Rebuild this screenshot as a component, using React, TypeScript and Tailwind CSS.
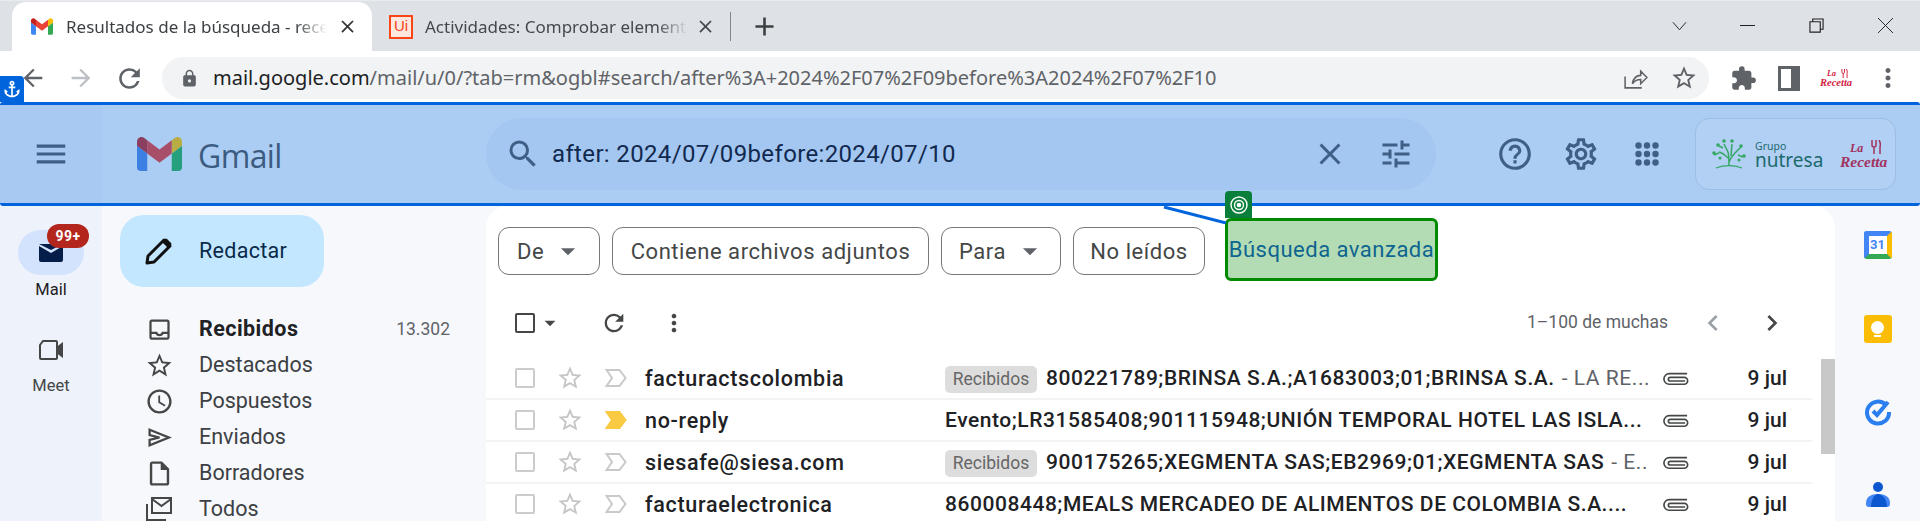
import {
  MdAnchor,
  MdArrowBack,
  MdArrowDropDown,
  MdArrowForward,
  MdChevronLeft,
  MdChevronRight,
  MdClose,
  MdExtension,
  MdLock,
  MdMenu,
  MdMoreVert,
  MdOutlineHelpOutline,
  MdOutlineInbox,
  MdOutlineInsertDriveFile,
  MdOutlineSettings,
  MdOutlineWatchLater,
  MdRefresh,
  MdSearch,
  MdStarBorder,
  MdTune,
  MdAdd,
} from "react-icons/md"

const rows = [
  { sender: "facturactscolombia", chip: true, subject: "800221789;BRINSA S.A.;A1683003;01;BRINSA S.A.", snippet: "- LA RE...", important: false },
  { sender: "no-reply", chip: false, subject: "Evento;LR31585408;901115948;UNIÓN TEMPORAL HOTEL LAS ISLA...", snippet: "", important: true },
  { sender: "siesafe@siesa.com", chip: true, subject: "900175265;XEGMENTA SAS;EB2969;01;XEGMENTA SAS", snippet: "- E..", important: false },
  { sender: "facturaelectronica", chip: false, subject: "860008448;MEALS MERCADEO DE ALIMENTOS DE COLOMBIA S.A....", snippet: "", important: false },
]

function GmailLogo({ className, tinted }: { className: string; tinted?: boolean }) {
  return (
    <svg viewBox="52 42 88 66" className={className}>
      <path fill={tinted ? "#3b80e2" : "#4285f4"} d="M58 108h14V74L52 59v43c0 3.32 2.69 6 6 6" />
      <path fill={tinted ? "#269f7c" : "#34a853"} d="M120 108h14c3.32 0 6-2.69 6-6V59l-20 15" />
      <path fill={tinted ? "#b8ad45" : "#fbbc04"} d="M120 48v26l20-15v-8c0-7.42-8.47-11.65-14.4-7.2" />
      <path fill={tinted ? "#a94e68" : "#ea4335"} d="M72 74V48l24 18 24-18v26L96 92" />
      <path fill={tinted ? "#8a3f5f" : "#c5221f"} d="M52 51v8l20 15V48l-5.6-4.2c-5.94-4.45-14.4-.22-14.4 7.2" />
    </svg>
  )
}

function ImportanceMark({ on }: { on: boolean }) {
  return (
    <svg viewBox="0 0 22 20" className="h-[20px] w-[22px]">
      <path
        d="M1.5 2h13l6 8-6 8h-13l5.5-8z"
        fill={on ? "#f9cb45" : "none"}
        stroke={on ? "#f9cb45" : "#c9c9c9"}
        strokeWidth="2"
      />
    </svg>
  )
}

function SentIcon() {
  return (
    <svg viewBox="0 0 24 24" className="h-[25px] w-[25px] fill-none stroke-[#444746] stroke-[2.2]">
      <path d="M2.5 4.5 21 12 2.5 19.5v-5.2L12 12 2.5 9.7z" />
    </svg>
  )
}

function AllMailIcon() {
  return (
    <svg viewBox="0 0 26 24" className="h-[24px] w-[26px] fill-none stroke-[#444746] stroke-[2]">
      <path d="M6 1h19v15H6zM6 2l9.5 7L25 2" />
      <path d="M1 7v16h19" />
    </svg>
  )
}

function PaperClip() {
  return (
    <svg viewBox="0 0 28 16" className="h-[16px] w-[27px] shrink-0 fill-none stroke-[#444746] stroke-[1.7]">
      <path d="M26 3.5H7.5a5.5 5.5 0 0 0 0 11H23a3.6 3.6 0 0 0 0-7.2H8.5a1.9 1.9 0 0 0 0 3.8H24" />
    </svg>
  )
}

function AppsGrid() {
  return (
    <svg viewBox="0 0 24 24" className="ml-[35px] h-[24px] w-[24px] fill-[#3f5f86]">
      {[3.5, 12, 20.5].map((y) =>
        [3.5, 12, 20.5].map((x) => <circle key={`${x}-${y}`} cx={x} cy={y} r="3.2" />)
      )}
    </svg>
  )
}

function TreeLogo() {
  return (
    <svg viewBox="0 0 36 32" className="h-[32px] w-[36px] fill-none stroke-[#35a763] stroke-[1.5]">
      <path d="M18 28c0-7 0-10-1-14M18 24c2-5 4-7 6-9M17 20c-3-3-5-5-9-6M17 14 13 6M20 18l1-12M24 15l6-6M12 10 8 8M27 17l5 2M8 15l-5 2" />
      <path d="M5 30c8-3 18-3 26 0" strokeWidth="1.2" />
      <g className="fill-[#35a763] stroke-none">
        <circle cx="13" cy="3" r="1.8" />
        <circle cx="21" cy="3" r="1.8" />
        <circle cx="7" cy="7" r="1.8" />
        <circle cx="30" cy="8" r="1.8" />
        <circle cx="3" cy="15" r="1.8" />
        <circle cx="33" cy="18" r="1.8" />
        <circle cx="9" cy="20" r="1.5" />
        <circle cx="28" cy="22" r="1.5" />
      </g>
    </svg>
  )
}

function Recetta({ big }: { big?: boolean }) {
  return (
    <div className={big ? "flex w-[50px] flex-col font-['Liberation_Serif'] font-bold italic leading-none text-[#a2325f]" : "flex w-[34px] flex-col font-['Liberation_Serif'] font-bold italic leading-none text-[#d1213f]"}>
      <div className={big ? "flex items-end justify-between pl-[10px] pr-[9px]" : "flex items-end justify-between pl-[7px] pr-[6px]"}>
        <span className={big ? "text-[12px] leading-[12px]" : "text-[8px] leading-[8px]"}>La</span>
        <svg viewBox="0 0 10 14" className={big ? "h-[14px] w-[10px]" : "h-[9px] w-[7px]"}>
          <path d="M1 0v5q0 2 2 2v7M5 0v5q0 2-2 2M8 0q2 3 1 7v7" fill="none" stroke="currentColor" strokeWidth="1.5" />
        </svg>
      </div>
      <span className={big ? "text-[15.5px] leading-[15px]" : "text-[10.5px] leading-[10px]"}>Recetta</span>
    </div>
  )
}

function NavItem({ icon, label, count, bold }: { icon: React.ReactNode; label: string; count?: string; bold?: boolean }) {
  return (
    <div className="flex h-[36px] shrink-0 items-center">
      <div className="flex w-[77px] justify-center pr-[3px] text-[#444746]">{icon}</div>
      <span className={bold ? "flex-1 text-[21.5px] font-bold tracking-[0.45px] text-[#202124]" : "flex-1 text-[21.5px] text-[#3c4043]"}>{label}</span>
      {count && <span className="text-[17.5px] text-[#5f6368]">{count}</span>}
    </div>
  )
}

function FilterChip({ label, caret, width }: { label: string; caret?: boolean; width: string }) {
  return (
    <div className={`flex h-[48px] items-center justify-center rounded-[11px] border border-[#777] text-[22px] tracking-[0.55px] text-[#444746] ${width}`}>
      <span>{label}</span>
      {caret && <MdArrowDropDown className="ml-[7px] -mr-[4px] h-[34px] w-[34px] text-[#5f6368]" />}
    </div>
  )
}

export default function App() {
  return (
    <div className="flex h-[521px] w-[1920px] flex-col overflow-hidden bg-white font-['Roboto',sans-serif]">
      {/* chrome tab strip */}
      <div className="flex h-[51px] shrink-0 items-end border-t border-[#e8eaed] bg-[#dee1e6] pl-[12px] font-['Noto_Sans',sans-serif] text-[17px] text-[#45494e]">
        <div className="flex h-[49px] w-[360px] items-center rounded-t-[14px] bg-white pl-[19px]">
          <GmailLogo className="h-[17px] w-[22px]" />
          <span className="ml-[13px] w-[261px] overflow-hidden whitespace-nowrap text-[#3c4043] [mask-image:linear-gradient(to_right,black_88%,transparent)]">
            Resultados de la búsqueda - recetta
          </span>
          <MdClose className="ml-[10px] h-[21px] w-[21px] text-[#333]" />
        </div>
        <div className="flex h-[49px] w-[358px] items-center pl-[17px]">
          <div className="flex h-[24px] w-[24px] items-center justify-center border-[2px] border-[#fa4616] bg-[#fde8e0] font-['Liberation_Sans'] text-[15px] text-[#fa4616]">
            Ui
          </div>
          <span className="ml-[12px] w-[263px] overflow-hidden whitespace-nowrap [mask-image:linear-gradient(to_right,black_88%,transparent)]">
            Actividades: Comprobar elementos
          </span>
          <MdClose className="ml-[7px] h-[21px] w-[21px] text-[#45494e]" />
        </div>
        <div className="mb-[10px] h-[29px] w-px bg-[#80868b]" />
        <MdAdd className="mb-[9px] ml-[18px] h-[31px] w-[31px] text-[#3c4043]" />
        <div className="mb-[18px] ml-auto flex w-[248px] items-center text-[#202124]">
          <svg viewBox="0 0 16 10" className="h-[10px] w-[15px] fill-none stroke-[#202124]">
            <path d="M1 1l7 8 7-8" />
          </svg>
          <div className="ml-[53px] h-px w-[15px] bg-[#202124]" />
          <svg viewBox="0 0 16 16" className="ml-[54px] h-[15px] w-[15px] fill-none stroke-[#202124] stroke-[1.2]">
            <path d="M1 4h11v11H1zM4 4V1h11v11h-3" />
          </svg>
          <svg viewBox="0 0 16 16" className="ml-[54px] h-[15px] w-[15px] fill-none stroke-[#202124]">
            <path d="M0 0l16 16M16 0 0 16" />
          </svg>
        </div>
      </div>

      {/* chrome address bar */}
      <div className="flex h-[51px] shrink-0 items-start pt-[6px]">
        <div className="relative flex h-[42px] w-[162px] items-center">
          <MdArrowBack className="ml-[19px] h-[28px] w-[28px] text-[#5f6368]" />
          <MdArrowForward className="ml-[20px] h-[28px] w-[28px] text-[#bcbfc3]" />
          <MdRefresh className="ml-[19px] h-[31px] w-[31px] text-[#5f6368]" />
        </div>
        <div className="flex h-[42px] w-[1547px] items-center rounded-full bg-[#f1f3f4] pl-[18px]">
          <MdLock className="h-[19px] w-[19px] text-[#5f6368]" />
          <span className="ml-[14px] font-['Noto_Sans',sans-serif] text-[20px] text-[#5f6368]">
            <span className="text-[#202124]">mail.google.com</span>/mail/u/0/?tab=rm&ogbl#search/after%3A+2024%2F07%2F09before%3A2024%2F07%2F10
          </span>
          <svg viewBox="0 0 24 24" className="ml-auto h-[25px] w-[25px] fill-none stroke-[#5f6368] stroke-[1.5]">
            <path d="M2 10v11h16M9 17c1-5 4-8 8-8V5l6 6-6 6v-4c-3 0-6 1-8 4z" />
          </svg>
          <MdStarBorder className="ml-[22px] mr-[11px] h-[28px] w-[28px] text-[#5f6368]" />
        </div>
        <div className="flex h-[42px] flex-1 items-center pl-[21px] text-[#5f6368]">
          <MdExtension className="h-[27px] w-[27px]" />
          <div className="ml-[21px] h-[25px] w-[22px] border-[3px] border-r-[9px] border-[#5f6368]" />
          <div className="ml-[20px]">
            <Recetta />
          </div>
          <MdMoreVert className="ml-[19px] h-[30px] w-[30px]" />
        </div>
      </div>

      {/* gmail header with the selection frame */}
      <div className="relative flex h-[104px] shrink-0 items-center rounded-[3px] border-y-[3px] border-[#0064dc] bg-[#abcdf3] text-[#3f5f86]">
        <div className="absolute -top-[29px] left-0 flex h-[26px] w-[24px] items-center justify-center rounded-tr-[4px] bg-[#0064dc]">
          <MdAnchor className="h-[20px] w-[20px] text-white" />
        </div>
        <div className="flex h-full w-[102px] items-center justify-center bg-[#a8caf2] pr-[1px]">
          <MdMenu className="h-[38px] w-[38px]" />
        </div>
        <GmailLogo tinted className="ml-[35px] h-[34px] w-[45px]" />
        <span className="ml-[16px] w-[88px] pt-[3px] font-['Open_Sans',sans-serif] text-[32px] leading-none tracking-[-0.6px] text-[#3b5b80]">Gmail</span>
        <div className="ml-[200px] flex h-[72px] w-[950px] items-center rounded-full bg-[#a3c7f1]">
          <MdSearch className="ml-[19px] h-[36px] w-[36px]" />
          <span className="ml-[11px] flex-1 text-[24px] tracking-[0.35px] text-[#12294f]">after: 2024/07/09before:2024/07/10</span>
          <MdClose className="mr-[30px] h-[36px] w-[36px]" />
          <MdTune className="mr-[22px] h-[36px] w-[36px]" />
        </div>
        <MdOutlineHelpOutline className="ml-[60px] h-[38px] w-[38px]" />
        <MdOutlineSettings className="ml-[28px] h-[38px] w-[38px]" />
        <AppsGrid />
        <div className="ml-[36px] flex h-[72px] w-[201px] items-center rounded-[14px] border border-[#9dbde3] bg-[#b1d0f4] pl-[15px]">
          <TreeLogo />
          <div className="ml-[8px] flex w-[85px] flex-col font-['Noto_Sans',sans-serif] leading-none text-[#1c6a6c]">
            <span className="text-[10.5px] leading-[12px]">Grupo</span>
            <span className="text-[19px] leading-[17px]">nutresa</span>
          </div>
          <Recetta big />
        </div>
      </div>

      {/* gmail body */}
      <div className="flex min-h-0 flex-1 bg-[#f6f8fc]">
        <div className="flex w-[102px] shrink-0 flex-col items-center bg-[#edf2fb] pt-[24px]">
          <div className="relative flex h-[45px] w-[66px] items-center justify-center rounded-full bg-[#d3e3fd]">
            <svg viewBox="0 0 24 18" className="h-[18px] w-[24px]">
              <path fill="#041e49" d="M0 2l12 7 12-7v14a2 2 0 0 1-2 2H2a2 2 0 0 1-2-2z" />
              <path fill="#041e49" d="M0 0h24L12 6z" />
            </svg>
            <span className="absolute -top-[6px] left-[29px] flex h-[24px] w-[42px] items-center justify-center rounded-full bg-[#b3261e] text-[14px] font-bold tracking-[0.4px] text-white">
              99+
            </span>
          </div>
          <span className="mt-[4px] text-[16.5px] leading-[22px] text-[#1f1f1f]">Mail</span>
          <svg viewBox="0 0 24 20" className="mt-[39px] h-[20px] w-[24px] fill-none stroke-[#444746] stroke-[2]">
            <path d="M4 1h13a1 1 0 0 1 1 1v16a1 1 0 0 1-1 1H2a1 1 0 0 1-1-1V5z" />
            <path d="M19 7l4-3v12l-4-3z" className="fill-[#444746]" />
          </svg>
          <span className="mt-[15px] text-[16.5px] leading-[22px] text-[#444746]">Meet</span>
        </div>

        <div className="flex w-[384px] shrink-0 flex-col pt-[9px]">
          <div className="ml-[18px] flex h-[72px] w-[204px] shrink-0 items-center rounded-[24px] bg-[#c2e7ff]">
            <svg viewBox="0 0 28 28" className="ml-[25px] h-[28px] w-[28px]">
              <path d="M2 26l1-7L19 3l6 6L9 25z" fill="none" stroke="#111" strokeWidth="3" strokeLinejoin="round" />
              <path d="M17 5l3-3q1-1 2 0l4 4q1 1 0 2l-3 3z" fill="#111" />
            </svg>
            <span className="ml-[26px] pt-[1px] text-[21.5px] tracking-[0.3px] text-[#0b2a4a]">Redactar</span>
          </div>
          <div className="mt-[24px] flex shrink-0 flex-col pl-[20px] pr-[36px]">
            <NavItem bold label="Recibidos" count="13.302" icon={<MdOutlineInbox className="h-[27px] w-[27px]" />} />
            <NavItem label="Destacados" icon={<MdStarBorder className="h-[29px] w-[29px]" />} />
            <NavItem label="Pospuestos" icon={<MdOutlineWatchLater className="h-[29px] w-[29px]" />} />
            <NavItem label="Enviados" icon={<SentIcon />} />
            <NavItem label="Borradores" icon={<MdOutlineInsertDriveFile className="h-[29px] w-[29px]" />} />
            <NavItem label="Todos" icon={<AllMailIcon />} />
          </div>
        </div>

        <div className="relative flex w-[1349px] shrink-0 flex-col rounded-t-[22px] bg-white">
          {/* search chips */}
          <div className="flex h-[75px] shrink-0 items-start gap-[12px] pl-[12px] pt-[21px]">
            <FilterChip label="De" caret width="w-[102px]" />
            <FilterChip label="Contiene archivos adjuntos" width="w-[317px]" />
            <FilterChip label="Para" caret width="w-[120px]" />
            <FilterChip label="No leídos" width="w-[132px]" />
            <div className="relative -mt-[9px] ml-[8px] flex h-[63px] w-[213px] items-center justify-center whitespace-nowrap rounded-[6px] border-[3px] border-[#008a00] bg-[#b4dcb4] text-[22px] tracking-[0.5px] text-[#0d6590]">
              Búsqueda avanzada
              <div className="absolute -left-[3px] -top-[30px] flex h-[27px] w-[27px] items-center justify-center rounded-t-[4px] bg-[#0a7f3c]">
                <svg viewBox="0 0 20 20" className="h-[20px] w-[20px] fill-none stroke-white stroke-[1.4]">
                  <circle cx="10" cy="10" r="8" />
                  <circle cx="10" cy="10" r="4.5" />
                  <circle cx="10" cy="10" r="1.6" className="fill-white" />
                </svg>
              </div>
            </div>
          </div>
          <svg viewBox="0 0 64 18" className="absolute left-[677px] top-0 h-[18px] w-[64px]">
            <path d="M1 1l62 16" stroke="#0064dc" strokeWidth="3" />
          </svg>

          {/* list toolbar */}
          <div className="flex h-[77px] shrink-0 items-center pt-[6px] text-[#444746]">
            <div className="ml-[29px] h-[20px] w-[20px] rounded-[2px] border-[2.5px] border-[#444746]" />
            <MdArrowDropDown className="ml-[2px] h-[26px] w-[26px]" />
            <MdRefresh className="ml-[37px] h-[28px] w-[28px]" />
            <MdMoreVert className="ml-[32px] h-[28px] w-[28px]" />
            <span className="ml-auto mr-[-1px] text-[17.5px] text-[#5f6368]">1–100 de muchas</span>
            <MdChevronLeft className="ml-[30px] h-[32px] w-[32px] text-[#9aa0a6]" />
            <MdChevronRight className="ml-[27px] mr-[47px] h-[32px] w-[32px] text-[#444746]" />
          </div>

          {/* message rows */}
          <div className="relative flex shrink-0 flex-col pr-[23px]">
            {rows.map((row) => (
              <div key={row.sender} className="flex h-[42px] shrink-0 items-center border-b-2 border-[#f1f3f4] text-[21px] text-[#202124]">
                <div className="ml-[29px] h-[20px] w-[20px] shrink-0 rounded-[2px] border-[2.5px] border-[#cccccc]" />
                <MdStarBorder className="ml-[21px] h-[28px] w-[28px] shrink-0 text-[#c4c7c5]" />
                <div className="ml-[21px] shrink-0">
                  <ImportanceMark on={row.important} />
                </div>
                <span className="ml-[18px] w-[300px] shrink-0 pt-[2px] text-[21.5px] font-medium tracking-[0.7px]">{row.sender}</span>
                <div className="flex w-[717px] shrink-0 items-center whitespace-nowrap pt-[2px]">
                  {row.chip && (
                    <span className="mr-[9px] flex h-[27px] w-[92px] items-center justify-center rounded-[5px] bg-[#dddddd] text-[17.5px] text-[#666]">
                      Recibidos
                    </span>
                  )}
                  <span className="font-medium tracking-[0.55px]">{row.subject}</span>
                  {row.snippet && <span className="ml-[7px] tracking-[0.55px] text-[#5f6368]">{row.snippet}</span>}
                </div>
                <PaperClip />
                <span className="ml-auto mr-[25px] pt-[2px] font-medium">9 jul</span>
              </div>
            ))}
            <div className="absolute right-0 top-[1px] h-[95px] w-[14px] bg-[#c8c8c8]" />
          </div>
        </div>

        {/* right addon rail */}
        <div className="flex flex-1 flex-col items-center pt-[25px]">
          <div className="relative h-[28px] w-[28px] rounded-[3px] border-[5px] border-b-[#34a853] border-l-[#4285f4] border-r-[#fbbc04] border-t-[#4285f4] bg-white text-center text-[13px] font-bold leading-[18px] text-[#4285f4]">
            31
          </div>
          <div className="mt-[56px] flex h-[28px] w-[28px] flex-col items-center justify-center gap-[1px] rounded-[3px] bg-[#fbbc04]">
            <div className="h-[13px] w-[13px] rounded-full bg-white" />
            <div className="h-[2px] w-[7px] bg-white" />
          </div>
          <svg viewBox="0 0 28 28" className="mt-[55px] h-[28px] w-[28px] fill-none stroke-[#2a7ef0] stroke-[4]">
            <path d="M22 7a11 11 0 1 0 3 7" />
            <path d="M9 13l4 4 11-13" />
          </svg>
          <svg viewBox="0 0 24 26" className="mt-[55px] h-[26px] w-[24px]">
            <circle cx="12" cy="6" r="5" fill="#0b57d0" />
            <path d="M0 22c0-6 5-9 12-9s12 3 12 9v1a3 3 0 0 1-3 3H3a3 3 0 0 1-3-3z" fill="#4285f4" />
            <path d="M5 26c0-6 3-13 7-13s9 5 9 13z" fill="#0b57d0" />
          </svg>
        </div>
      </div>
    </div>
  )
}
